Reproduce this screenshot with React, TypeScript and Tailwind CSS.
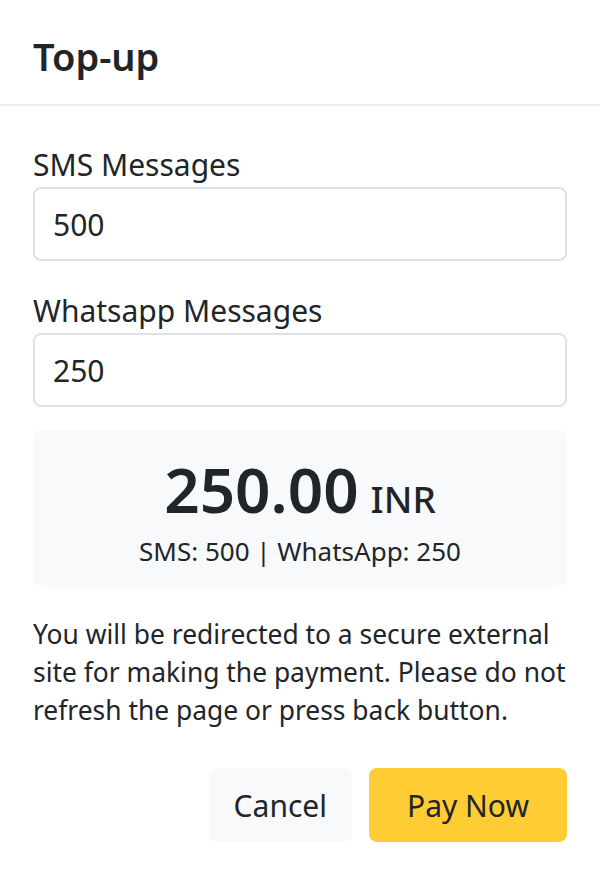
const font = { fontFamily: '"Noto Sans", "Open Sans", sans-serif' };

const Field = ({ label, value }: { label: string; value: string }) => (
	<div>
		<label className="block text-[30px] leading-[42px] text-[#212529] mb-[1px]">{label}</label>
		<div className="h-[74px] border-2 border-[#dee2e6] rounded-[8px] px-[18px] flex items-center text-[30px] text-[#212529]">
			{value}
		</div>
	</div>
);

export default function App() {
	return (
		<div className="w-[600px] h-[876px] bg-white" style={font}>
			<div className="h-[106px] border-b-2 border-[#e9ecef] px-[33px] flex items-center pt-[8px]">
				<h1 className="text-[38px] font-semibold text-[#212529] leading-none">Top-up</h1>
			</div>

			<div className="px-[33px] pt-[38px]">
				<Field label="SMS Messages" value="500" />
				<div className="mt-[29px]">
					<Field label="Whatsapp Messages" value="250" />
				</div>

				<div className="mt-[23px] h-[157px] bg-[#f8f9fa] rounded-[10px] flex flex-col items-center justify-center">
					<div className="flex items-baseline gap-[12px] text-[#212529] pt-[4px]">
						<span className="text-[62px] font-semibold leading-none">250.00</span>
						<span className="text-[37px] font-medium leading-none">INR</span>
					</div>
					<div className="mt-[18px] text-[26px] leading-none text-[#212529]">SMS: 500 | WhatsApp: 250</div>
				</div>

				<p className="mt-[28px] text-[26.4px] leading-[38px] text-[#212529]">
					You will be redirected to a secure external
					<br />
					site for making the payment. Please do not
					<br />
					refresh the page or press back button.
				</p>

				<div className="mt-[39px] flex justify-end gap-[17px]">
					<button className="h-[74px] px-[25px] rounded-[8px] bg-[#f8f9fa] text-[30px] text-[#212529]">Cancel</button>
					<button className="h-[74px] px-[38px] rounded-[8px] bg-[#ffcd33] text-[30px] text-[#212529]">Pay Now</button>
				</div>
			</div>
		</div>
	);
}
